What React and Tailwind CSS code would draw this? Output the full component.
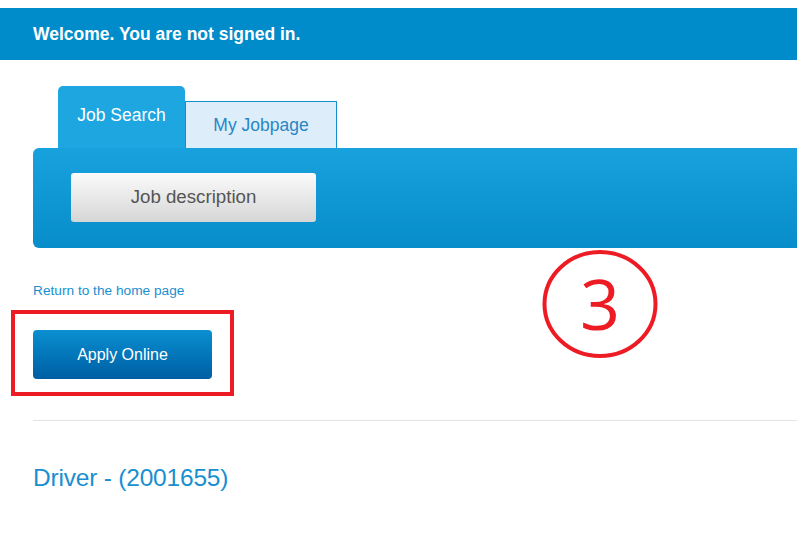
import React from "react";

const App = () => {
  return (
    <div className="relative w-[797px] h-[541px] overflow-hidden bg-white" style={{ fontFamily: '"Liberation Sans", Arial, sans-serif' }}>
      {/* Header bar */}
      <div className="mt-[8px] h-[52px] bg-[#008bca] flex items-center pl-[33px]">
        <span className="text-white font-bold text-[17.5px]">Welcome. You are not signed in.</span>
      </div>

      {/* Tabs */}
      <div className="pl-[58px] pt-[26px] flex items-end">
        <div className="w-[127px] h-[62px] bg-[#1da6e0] rounded-t-[5px] flex justify-center pt-[16px] text-white text-[17.5px]">
          Job Search
        </div>
        <div className="w-[152px] h-[47px] bg-[#ddeefa] border border-[#1590cc] border-b-0 flex justify-center pt-[10px] text-[#2a86c4] text-[17.5px]">
          My Jobpage
        </div>
      </div>

      {/* Blue panel */}
      <div className="ml-[33px] h-[100px] rounded-bl-[6px] rounded-tl-[6px] bg-gradient-to-b from-[#18a2dd] to-[#068dca] pl-[38px] pt-[25px]">
        <button className="w-[245px] h-[49px] rounded-[3px] bg-gradient-to-b from-[#fbfbfb] to-[#d6d6d6] text-[#555] text-[18.7px]">
          Job description
        </button>
      </div>

      {/* Links and button */}
      <div className="pl-[33px] pt-[35px]">
        <a className="text-[#1a8fd0] text-[13.7px] block leading-[15px]">Return to the home page</a>
        <button className="mt-[32px] w-[179px] h-[49px] rounded-[4px] bg-gradient-to-b from-[#0b90d1] to-[#005ea3] text-white text-[16px]">
          Apply Online
        </button>
      </div>

      <div className="ml-[33px] mt-[41px] h-px bg-[#e2e2e2]" />

      <h1 className="pl-[33px] mt-[43px] text-[#1a8fd0] text-[24.5px] leading-[28px] tracking-[-0.2px]">Driver - (2001655)</h1>

      {/* Annotations */}
      <div className="absolute left-[11px] top-[310px] w-[223px] h-[86px] border-[4px] border-[#ed1c24]" />
      <svg className="absolute left-[542px] top-[249px]" width="116" height="110" viewBox="0 0 116 110">
        <ellipse cx="58" cy="55" rx="55.5" ry="52" fill="none" stroke="#ed1c24" strokeWidth="4" />
      </svg>
      <div className="absolute left-[542px] top-[249px] w-[116px] h-[110px] flex items-center justify-center text-[#ed1c24] text-[70px] leading-none pb-[2px]" style={{ fontFamily: '"Open Sans", sans-serif' }}>
        3
      </div>
    </div>
  );
};

export default App;
